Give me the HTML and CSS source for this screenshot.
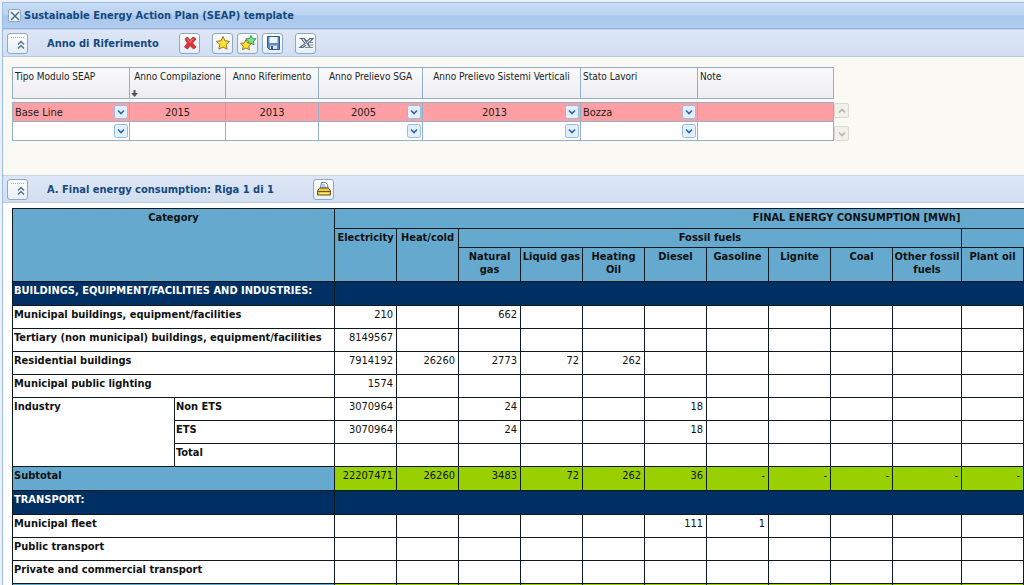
FILE: index.html
```html
<!DOCTYPE html>
<html lang="it">
<head>
<meta charset="utf-8">
<title>Sustainable Energy Action Plan (SEAP) template</title>
<link rel="stylesheet" href="styles.css">
</head>
<body>
<main class="window">
  <header class="titlebar">
    <button class="close" type="button" aria-label="Chiudi"><svg viewBox="0 0 12 12" width="12" height="12"><path d="M2 2l8 8M10 2l-8 8" stroke="#3b6593" stroke-width="1.4" fill="none"/></svg></button>
    <h1>Sustainable Energy Action Plan (SEAP) template</h1>
  </header>

  <div class="toolbar">
    <button class="tool" type="button" aria-label="Comprimi"><svg viewBox="0 0 18 18" width="18" height="18"><path d="M2 3.500h13" stroke="#9aabba" stroke-dasharray="1 1"/><path d="M9 10.500l3-3 3 3M9 14.500l3-3 3 3" stroke="#4c7088" stroke-width="1.400" fill="none"/></svg></button>
    <h2 class="toolbar-title year">Anno di Riferimento</h2>
    <div class="tools">
      <button class="tool" type="button" aria-label="Elimina"><svg viewBox="0 0 18 18" width="18" height="18"><path d="M4 5l2.500-2L9 6.500 12 3l3 2-3.500 4 3.500 4-2.500 2L9 11.500 6.500 15 3.500 13l3-4z" fill="#dc3434" stroke="#b8343a"/><path d="M6 4.500l3 4 3-4" stroke="#f48a85" fill="none"/></svg></button>
      <span class="tool-group">
        <button class="tool" type="button" aria-label="Nuovo"><svg viewBox="0 0 18 18" width="18" height="18"><path d="M9 2.500l2 4.300 4.500.5-3.300 3.200.9 4.700L9 13l-4.100 2.200.9-4.700-3.300-3.200 4.500-.5z" fill="#ffe22e" stroke="#97762a"/></svg></button>
        <button class="tool" type="button" aria-label="Duplica"><svg viewBox="0 0 18 18" width="18" height="18"><path d="M12 1.500l1.500 3 3.500.3-2.500 2.500.6 3.500-3.100-1.500-3.200 1.500.7-3.500L7 4.800l3.500-.3z" fill="#7be08a" stroke="#35a458"/><path d="M7 5.500l1.700 3.400 3.800.5-2.800 2.600.7 3.700L7 14l-3.400 1.700.7-3.700-2.800-2.600 3.800-.5z" fill="#ffe22e" stroke="#97762a"/></svg></button>
        <button class="tool" type="button" aria-label="Salva"><svg viewBox="0 0 18 18" width="18" height="18"><path d="M3.500 2.500h12v13h-10l-2-2z" fill="#5e8dc5" stroke="#315a8f"/><path d="M5.500 3h8v6h-8z" fill="#eef5fb"/><path d="M6 11.500h7V15H6z" fill="#d8e4ef"/><path d="M7 12h2v3H7z" fill="#315a8f"/></svg></button>
      </span>
      <button class="tool" type="button" aria-label="Esporta in Excel"><svg viewBox="0 0 18 18" width="18" height="18"><path d="M2.500 4.500h5l2 3 3.500-3h3l-5 5 1.500 2.500M4.500 5l3.500 4.500-5 4h3l3-2.500M7 4.500l6 9" fill="none" stroke="#58697e" stroke-width="1.200"/><path d="M12 8.500h4M13 11h3M8 13.500h8" stroke="#7d8a9a"/></svg></button>
    </div>
  </div>

  <section class="records">
    <table class="grid">
      <colgroup><col class="g-type"><col class="g-comp"><col class="g-ref"><col class="g-sga"><col class="g-vert"><col class="g-state"><col class="g-note"></colgroup>
      <thead>
        <tr><th class="start">Tipo Modulo SEAP</th><th class="sorted">Anno Compilazione<svg class="sort" viewBox="0 0 7 7" width="7" height="7"><path d="M2.500 0h2v3H7L3.500 7 0 3h2.500z" fill="#555"/></svg></th><th>Anno Riferimento</th><th>Anno Prelievo SGA</th><th>Anno Prelievo Sistemi Verticali</th><th class="start">Stato Lavori</th><th class="start">Note</th></tr>
      </thead>
      <tbody class="spacer"><tr><td colspan="7"></td></tr></tbody>
      <tbody>
        <tr class="selected">
          <td><select aria-label="Tipo Modulo SEAP"><option>Base Line</option></select></td>
          <td><input type="text" value="2015" aria-label="Anno Compilazione"></td>
          <td><input type="text" value="2013" aria-label="Anno Riferimento"></td>
          <td><select class="center" aria-label="Anno Prelievo SGA"><option>2005</option></select></td>
          <td><select class="center" aria-label="Anno Prelievo Sistemi Verticali"><option>2013</option></select></td>
          <td><select aria-label="Stato Lavori"><option>Bozza</option></select></td>
          <td><input type="text" aria-label="Note"></td>
        </tr>
        <tr>
          <td><select aria-label="Tipo Modulo SEAP"><option></option></select></td>
          <td><input type="text" aria-label="Anno Compilazione"></td>
          <td><input type="text" aria-label="Anno Riferimento"></td>
          <td><select aria-label="Anno Prelievo SGA"><option></option></select></td>
          <td><select aria-label="Anno Prelievo Sistemi Verticali"><option></option></select></td>
          <td><select aria-label="Stato Lavori"><option></option></select></td>
          <td><input type="text" aria-label="Note"></td>
        </tr>
      </tbody>
    </table>
    <div class="pager">
      <button type="button" aria-label="Su"><svg viewBox="0 0 10 10" width="10" height="10"><path d="M2 6.500l3-3 3 3" stroke="#b5b5aa" stroke-width="1.600" fill="none"/></svg></button>
      <button type="button" aria-label="Giù"><svg viewBox="0 0 10 10" width="10" height="10"><path d="M2 3.500l3 3 3-3" stroke="#b5b5aa" stroke-width="1.600" fill="none"/></svg></button>
    </div>
  </section>

  <div class="toolbar">
    <button class="tool" type="button" aria-label="Comprimi"><svg viewBox="0 0 18 18" width="18" height="18"><path d="M2 3.500h13" stroke="#9aabba" stroke-dasharray="1 1"/><path d="M9 10.500l3-3 3 3M9 14.500l3-3 3 3" stroke="#4c7088" stroke-width="1.400" fill="none"/></svg></button>
    <h2 class="toolbar-title section">A. Final energy consumption: Riga 1 di 1</h2>
    <button class="tool" type="button" aria-label="Stampa"><svg viewBox="0 0 18 18" width="18" height="18"><path d="M5.500 8l1-5.500h4l2 2L13 8z" fill="#f5f8ff" stroke="#6379a5"/><path d="M7 5h3M7 7h4" stroke="#7d98c8"/><path d="M4.500 8h9l2 3v4h-13v-4z" fill="#f1c83a" stroke="#66592c"/><path d="M3 11.500h12" stroke="#66592c"/><path d="M5 13.500h8" stroke="#fff09b"/></svg></button>
  </div>

  <section class="report">
    <table class="energy">
      <colgroup><col class="c-cat"><col class="c-sub"><col span="9" class="c-val"><col class="c-other"><col class="c-val"><col class="c-rest"></colgroup>
      <thead>
        <tr class="h1"><th colspan="2" rowspan="3">Category</th><th colspan="12">FINAL ENERGY CONSUMPTION [MWh]</th></tr>
        <tr class="h2"><th rowspan="2">Electricity</th><th rowspan="2">Heat/cold</th><th colspan="8">Fossil fuels</th><th colspan="2"></th></tr>
        <tr class="h3"><th>Natural gas</th><th>Liquid gas</th><th>Heating Oil</th><th>Diesel</th><th>Gasoline</th><th>Lignite</th><th>Coal</th><th>Other fossil fuels</th><th>Plant oil</th><th></th></tr>
      </thead>
      <tbody>
        <tr class="band"><th colspan="2">BUILDINGS, EQUIPMENT/FACILITIES AND INDUSTRIES:</th><td colspan="12"></td></tr>
        <tr><th colspan="2">Municipal buildings, equipment/facilities</th><td>210</td><td></td><td>662</td><td></td><td></td><td></td><td></td><td></td><td></td><td></td><td></td><td></td></tr>
        <tr><th colspan="2">Tertiary (non municipal) buildings, equipment/facilities</th><td>8149567</td><td></td><td></td><td></td><td></td><td></td><td></td><td></td><td></td><td></td><td></td><td></td></tr>
        <tr><th colspan="2">Residential buildings</th><td>7914192</td><td>26260</td><td>2773</td><td>72</td><td>262</td><td></td><td></td><td></td><td></td><td></td><td></td><td></td></tr>
        <tr><th colspan="2">Municipal public lighting</th><td>1574</td><td></td><td></td><td></td><td></td><td></td><td></td><td></td><td></td><td></td><td></td><td></td></tr>
        <tr><th rowspan="3">Industry</th><th>Non ETS</th><td>3070964</td><td></td><td>24</td><td></td><td></td><td>18</td><td></td><td></td><td></td><td></td><td></td><td></td></tr>
        <tr><th>ETS</th><td>3070964</td><td></td><td>24</td><td></td><td></td><td>18</td><td></td><td></td><td></td><td></td><td></td><td></td></tr>
        <tr><th>Total</th><td></td><td></td><td></td><td></td><td></td><td></td><td></td><td></td><td></td><td></td><td></td><td></td></tr>
        <tr class="subtotal"><th colspan="2">Subtotal</th><td>22207471</td><td>26260</td><td>3483</td><td>72</td><td>262</td><td>36</td><td>-</td><td>-</td><td>-</td><td>-</td><td>-</td><td></td></tr>
      </tbody>
      <tbody>
        <tr class="band"><th colspan="2">TRANSPORT:</th><td colspan="12"></td></tr>
        <tr><th colspan="2">Municipal fleet</th><td></td><td></td><td></td><td></td><td></td><td>111</td><td>1</td><td></td><td></td><td></td><td></td><td></td></tr>
        <tr><th colspan="2">Public transport</th><td></td><td></td><td></td><td></td><td></td><td></td><td></td><td></td><td></td><td></td><td></td><td></td></tr>
        <tr><th colspan="2">Private and commercial transport</th><td></td><td></td><td></td><td></td><td></td><td></td><td></td><td></td><td></td><td></td><td></td><td></td></tr>
        <tr class="subtotal"><th colspan="2"></th><td></td><td></td><td></td><td></td><td></td><td></td><td></td><td></td><td></td><td></td><td></td><td></td></tr>
      </tbody>
    </table>
  </section>
</main>
</body>
</html>
```
FILE: styles.css
```css
* { box-sizing: border-box; }
html { height: 100%; }
body {
  margin: 0;
  height: 100%;
  overflow: hidden;
  background: #eaf1fb;
  font-family: "DejaVu Sans Condensed", "DejaVu Sans", sans-serif;
  font-size: 11px;
  line-height: 13px;
  color: #222;
}
button, input, select { font: inherit; color: inherit; margin: 0; }
h1, h2 { margin: 0; font-size: 11px; line-height: 13px; color: #15497f; }
svg { display: block; flex: none; }

.window {
  min-height: 100%;
  margin: 2px 0 0 2px;
  border-left: 1px solid #9dbbe3;
  background: #fff;
}
.titlebar {
  display: flex;
  align-items: center;
  gap: 3px;
  height: 27px;
  padding-left: 5px;
  border-top: 1px solid #9dbbe3;
  border-bottom: 1px solid #8fb2e2;
  background: linear-gradient(#c8dcf4, #b9d2f0 48%, #a8c6ec 52%, #b2ceef);
}
.close {
  display: grid;
  place-items: center;
  width: 13px;
  height: 13px;
  padding: 0;
  border: 1px solid #8aa9cc;
  border-radius: 2px;
  background: #f1f6fc;
}
.toolbar {
  display: flex;
  align-items: center;
  height: 28px;
  padding-left: 4px;
  border-top: 1px solid #c5d3ea;
  border-bottom: 1px solid #b7c9e4;
  background: linear-gradient(#dde6f5, #d2def1);
}
.tool {
  display: grid;
  place-items: center;
  width: 21px;
  height: 21px;
  padding: 0;
  border: 1px solid #8fa9c4;
  border-radius: 3px;
  background: linear-gradient(#fff, #e6eef6);
}
.toolbar-title { margin-left: 19px; white-space: nowrap; }
.year { width: 132px; }
.section { width: 266px; }
.tools { display: flex; gap: 12px; }
.tool-group { display: flex; gap: 4px; }

.records {
  display: flex;
  align-items: flex-end;
  padding: 10px 9px 34px;
  background: #fbf9f3;
}
.grid, .energy { border-collapse: collapse; table-layout: fixed; }
.grid { width: 821px; flex: none; }
.g-type { width: 117px; }
.g-comp { width: 96px; }
.g-ref { width: 93px; }
.g-sga { width: 104px; }
.g-vert { width: 158px; }
.g-state { width: 117px; }
.g-note { width: 136px; }
.grid th {
  height: 31px;
  padding: 2px 2px 0;
  border: 1px solid #93b0c4;
  background: linear-gradient(#fafafc, #ededf2);
  font-size: 10px;
  font-weight: normal;
  vertical-align: top;
  white-space: nowrap;
}
.grid .start { text-align: left; }
.sorted { position: relative; }
.sort { position: absolute; left: 1px; bottom: 1px; }
.grid td {
  height: 19px;
  padding: 0;
  border: 1px solid #93b0c4;
  background: #fff;
}
.grid .spacer td { height: 4px; border-width: 1px 0; background: #fbf9f3; }
.grid .selected td { background: #ff9fa3; }
.grid input, .grid select {
  display: block;
  width: 100%;
  height: 18px;
  padding: 0 2px;
  border: 0;
  border-radius: 0;
  background-color: transparent;
  outline: 0;
}
.grid input { text-align: center; }
.grid select {
  appearance: none;
  padding-right: 16px;
  background-image: url("data:image/svg+xml,%3Csvg xmlns='http://www.w3.org/2000/svg' width='14' height='14'%3E%3Crect x='.5' y='.5' width='13' height='13' rx='2' fill='%23e3effc' stroke='%2396bce2'/%3E%3Cpath d='M4 5.500l3 3 3-3' fill='none' stroke='%23316aa0' stroke-width='1.700'/%3E%3C/svg%3E");
  background-repeat: no-repeat;
  background-position: right 1px center;
}
.grid .center { text-align-last: center; }
.pager { display: flex; flex-direction: column; gap: 8px; }
.pager button {
  display: grid;
  place-items: center;
  width: 15px;
  height: 15px;
  padding: 0;
  border: 1px solid #d9d9d0;
  border-radius: 2px;
  background: #f1f0ea;
}

.report { overflow: hidden; padding: 5px 0 0 9px; }
.energy { width: 1366px; color: #111; }
.c-cat { width: 162px; }
.c-sub { width: 160px; }
.c-val { width: 62px; }
.c-other { width: 69px; }
.c-rest { width: 355px; }
.energy th, .energy td {
  padding: 2px 1px 0;
  border: 1px solid #101820;
  vertical-align: top;
}
.energy td { height: 23px; padding-right: 3px; text-align: right; }
.energy tbody th { text-align: left; white-space: nowrap; }
.energy thead th { background: #66a9ce; }
.h1 { height: 20px; }
.h2 { height: 19px; }
.h3 { height: 34px; }
.energy .band th, .energy .band td { height: 24px; background: #003063; color: #fff; }
.energy .subtotal th { background: #66a9ce; }
.energy .subtotal td { height: 24px; background: #99d000; }
```
